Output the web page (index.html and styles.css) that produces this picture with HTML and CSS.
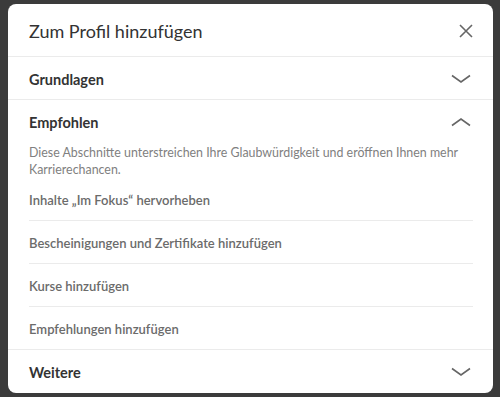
FILE: index.html
```html
<!DOCTYPE html>
<html lang="de">
<head>
    <meta charset="UTF-8">
    <title>Zum Profil hinzufügen</title>
    <link rel="stylesheet" href="styles.css">
</head>
<body>
    <div class="modal">
        <div class="modal-header">
            <h1>Zum Profil hinzufügen</h1>
            <button class="close" type="button" aria-label="Schließen">
                <svg width="16" height="16" viewBox="0 0 16 16"><path d="M2 2 L14 14 M14 2 L2 14" stroke="#666" stroke-width="1.6" fill="none"/></svg>
            </button>
        </div>

        <div class="section">
            <div class="section-head">
                <h2>Grundlagen</h2>
                <svg class="chevron" width="20" height="10" viewBox="0 0 20 10"><path d="M1 1.5 L10 8 L19 1.5" stroke="#666" stroke-width="1.6" fill="none"/></svg>
            </div>
        </div>

        <div class="section">
            <div class="section-head">
                <h2>Empfohlen</h2>
                <svg class="chevron" width="20" height="10" viewBox="0 0 20 10"><path d="M1 8.5 L10 2 L19 8.5" stroke="#666" stroke-width="1.6" fill="none"/></svg>
            </div>
            <p class="desc">Diese Abschnitte unterstreichen Ihre Glaubwürdigkeit und eröffnen Ihnen mehr Karrierechancen.</p>
            <ul class="items">
                <li>Inhalte „Im Fokus“ hervorheben</li>
                <li>Bescheinigungen und Zertifikate hinzufügen</li>
                <li>Kurse hinzufügen</li>
                <li>Empfehlungen hinzufügen</li>
            </ul>
        </div>

        <div class="section last">
            <div class="section-head">
                <h2>Weitere</h2>
                <svg class="chevron" width="20" height="10" viewBox="0 0 20 10"><path d="M1 1.5 L10 8 L19 1.5" stroke="#666" stroke-width="1.6" fill="none"/></svg>
            </div>
        </div>
    </div>
</body>
</html>
```

FILE: styles.css
```css
body {
    font-family: Lato, "Open Sans", sans-serif;
    background-color: #3b3b3b;
    margin: 0;
    padding: 4px 7px 4px 8px;
}
.modal {
    background-color: #fff;
    border-radius: 8px;
    height: 389px;
    overflow: hidden;
}
.modal-header {
    height: 53px;
    display: flex;
    align-items: center;
    justify-content: space-between;
    padding: 2px 19px 0 21px;
    box-sizing: border-box;
    border-bottom: 1px solid #ebebeb;
}
h1 {
    margin: 0;
    font-size: 18px;
    font-weight: normal;
    color: #333;
}
.close {
    background: none;
    border: none;
    padding: 0;
    display: flex;
}
.section {
    border-bottom: 1px solid #ebebeb;
}
.section.last {
    border-bottom: none;
}
.section-head {
    height: 42px;
    display: flex;
    align-items: center;
    justify-content: space-between;
    padding: 2px 22px 0 21px;
    box-sizing: border-box;
}
h2 {
    margin: 0;
    font-size: 14.5px;
    font-weight: bold;
    color: #333;
}
.desc {
    margin: 0 21px;
    padding-top: 2px;
    font-size: 12.4px;
    line-height: 17px;
    color: #808080;
}
.items {
    list-style: none;
    margin: 0 20px 0 21px;
    padding: 0;
}
.items li {
    height: 42px;
    line-height: 45px;
    font-size: 13px;
    font-weight: 600;
    color: #6b6b6b;
    border-bottom: 1px solid #ebebeb;
}
.items li:last-child {
    border-bottom: none;
}
```
